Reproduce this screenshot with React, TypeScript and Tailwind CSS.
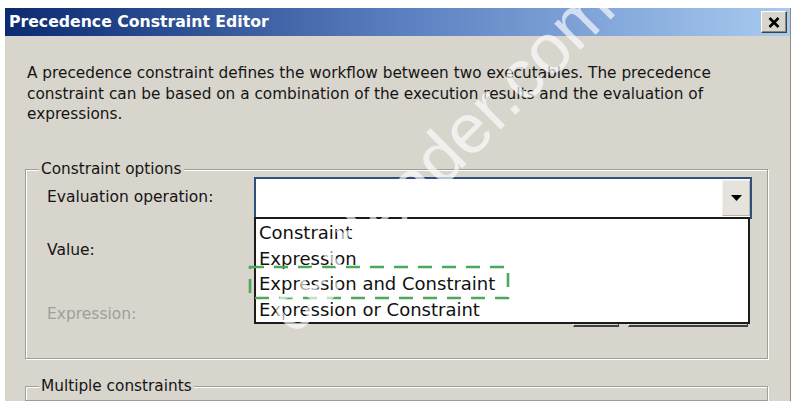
import React from 'react';

const listItems = ['Constraint', 'Expression', 'Expression and Constraint', 'Expression or Constraint'];

function CloseButton() {
  return (
    <button className="w-[26px] h-[22px] flex items-center justify-center bg-[#d8d5cd] border border-t-white border-l-white border-r-[#404040] border-b-[#404040] shadow-[inset_-1px_-1px_0_#8a877f]">
      <svg width="12" height="11" viewBox="0 0 12 11">
        <path d="M1.5 1 L10.5 10 M10.5 1 L1.5 10" stroke="#000" strokeWidth="2.6" />
      </svg>
    </button>
  );
}

function ComboBox() {
  return (
    <div className="relative w-[498px] h-[42px] bg-white border-2 border-[#2f4f7c] flex justify-end items-center">
      <div className="w-[28px] h-[36px] bg-[#e6e3dc] border border-t-[#f4f2ee] border-l-[#f4f2ee] border-r-[#b9b6ae] border-b-[#b9b6ae] flex items-center justify-center">
        <svg width="11" height="6" viewBox="0 0 11 6">
          <path d="M0 0 H11 L5.5 6 Z" fill="#000" />
        </svg>
      </div>
      <div className="absolute left-[-2px] top-full w-[496px] bg-white border-2 border-[#1c1c1c] pl-[3px] pt-[1px] z-10">
        {listItems.map((item) => (
          <div key={item} className="text-[18px] leading-[25.5px] text-[#111]">
            {item}
          </div>
        ))}
      </div>
    </div>
  );
}

export default function App() {
  return (
    <div className="relative w-[798px] h-[401px] overflow-hidden bg-white font-['DejaVu_Sans',sans-serif] text-[#141414]">
      <div className="ml-[5px] mt-[8px] w-[786px] h-[393px] bg-[#d8d5cd] border-r border-[#8f8c86] flex flex-col">
        <div className="h-[28px] shrink-0 flex items-center justify-between pl-[4px] pr-[3px] bg-linear-to-r from-[#0c2a70] via-[#5a7fc0] to-[#a9cbf0]">
          <span className="text-[15.7px] font-bold text-white leading-none">Precedence Constraint Editor</span>
          <CloseButton />
        </div>

        <p className="h-[98px] shrink-0 pl-[22px] pr-[40px] pt-[27px] text-[15.3px] leading-[20.5px]">
          A precedence constraint defines the workflow between two executables. The precedence constraint can be based on a combination of the execution results and the evaluation of expressions.
        </p>

        <fieldset className="ml-[20px] mt-[27px] w-[743px] border border-[#a19e97] shadow-[inset_1px_1px_0_#fff,1px_1px_0_#fff] pb-[10px]">
          <legend className="ml-[13px] px-[2px] bg-[#d8d5cd] text-[15.3px] leading-[16px]">Constraint options</legend>
          <div className="flex items-center h-[42px] pl-[21px]">
            <span className="w-[207px] text-[15.5px]">Evaluation operation:</span>
            <ComboBox />
          </div>
          <div className="flex items-center h-[63px] pl-[21px]">
            <span className="w-[207px] text-[15.5px]">Value:</span>
          </div>
          <div className="flex items-center h-[66px] pl-[21px]">
            <span className="w-[207px] text-[15.5px] text-[#a09e98]">Expression:</span>
            <div className="w-[498px] flex justify-end gap-[9px] pr-[4px]">
              <div className="w-[46px] h-[24px] bg-[#d8d5cd] border border-t-white border-l-white border-r-[#404040] border-b-[#404040] border-b-2" />
              <div className="w-[120px] h-[24px] bg-[#d8d5cd] border border-t-white border-l-white border-r-[#404040] border-b-[#404040] border-b-2" />
            </div>
          </div>
        </fieldset>

        <fieldset className="ml-[20px] mt-[19px] w-[743px] h-[60px] border border-[#a19e97] shadow-[inset_1px_1px_0_#fff,1px_1px_0_#fff]">
          <legend className="ml-[13px] px-[2px] bg-[#d8d5cd] text-[15.3px] leading-[16px]">Multiple constraints</legend>
        </fieldset>
      </div>

      <svg className="absolute left-[248px] top-[265px] z-[15]" width="264" height="37" viewBox="0 0 264 37">
        <rect x="2" y="2" width="258" height="31" fill="none" stroke="#4fa85a" strokeWidth="2.6" strokeDasharray="14 10" />
      </svg>

      <div className="absolute left-[252px] top-[295px] origin-top-left -rotate-45 text-[70px] leading-none font-['Liberation_Sans',sans-serif] text-white/65 whitespace-nowrap pointer-events-none z-20">
        certleader.com
      </div>
    </div>
  );
}
